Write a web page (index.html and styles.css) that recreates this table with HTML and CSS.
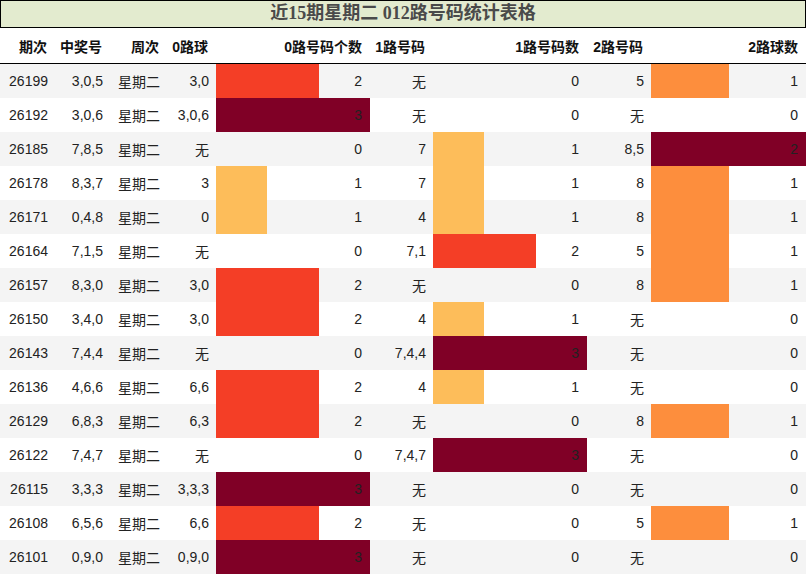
FILE: index.html
```html
<!DOCTYPE html>
<html lang="zh">
<head>
<meta charset="utf-8">
<link rel="stylesheet" href="styles.css">
</head>
<body>
<div class="title">近15期星期二 012路号码统计表格</div>
<table class="stats">
<colgroup>
<col class="c55"><col class="c55"><col class="c57"><col class="c49"><col class="c154"><col class="c63"><col class="c154"><col class="c64"><col class="c155">
</colgroup>
<thead>
<tr><th>期次</th><th>中奖号</th><th>周次</th><th>0路球</th><th>0路号码个数</th><th>1路号码</th><th>1路号码数</th><th>2路号码</th><th>2路球数</th></tr>
</thead>
<tbody>
<tr><td>26199</td><td>3,0,5</td><td>星期二</td><td>3,0</td><td class="bar"><i class="b2" style="width:66.67%"></i><span>2</span></td><td>无</td><td class="bar"><span>0</span></td><td>5</td><td class="bar"><i class="h1" style="width:50%"></i><span>1</span></td></tr>
<tr><td>26192</td><td>3,0,6</td><td>星期二</td><td>3,0,6</td><td class="bar"><i class="b3" style="width:100%"></i><span>3</span></td><td>无</td><td class="bar"><span>0</span></td><td>无</td><td class="bar"><span>0</span></td></tr>
<tr><td>26185</td><td>7,8,5</td><td>星期二</td><td>无</td><td class="bar"><span>0</span></td><td>7</td><td class="bar"><i class="b1" style="width:33.33%"></i><span>1</span></td><td>8,5</td><td class="bar"><i class="b3" style="width:100%"></i><span>2</span></td></tr>
<tr><td>26178</td><td>8,3,7</td><td>星期二</td><td>3</td><td class="bar"><i class="b1" style="width:33.33%"></i><span>1</span></td><td>7</td><td class="bar"><i class="b1" style="width:33.33%"></i><span>1</span></td><td>8</td><td class="bar"><i class="h1" style="width:50%"></i><span>1</span></td></tr>
<tr><td>26171</td><td>0,4,8</td><td>星期二</td><td>0</td><td class="bar"><i class="b1" style="width:33.33%"></i><span>1</span></td><td>4</td><td class="bar"><i class="b1" style="width:33.33%"></i><span>1</span></td><td>8</td><td class="bar"><i class="h1" style="width:50%"></i><span>1</span></td></tr>
<tr><td>26164</td><td>7,1,5</td><td>星期二</td><td>无</td><td class="bar"><span>0</span></td><td>7,1</td><td class="bar"><i class="b2" style="width:66.67%"></i><span>2</span></td><td>5</td><td class="bar"><i class="h1" style="width:50%"></i><span>1</span></td></tr>
<tr><td>26157</td><td>8,3,0</td><td>星期二</td><td>3,0</td><td class="bar"><i class="b2" style="width:66.67%"></i><span>2</span></td><td>无</td><td class="bar"><span>0</span></td><td>8</td><td class="bar"><i class="h1" style="width:50%"></i><span>1</span></td></tr>
<tr><td>26150</td><td>3,4,0</td><td>星期二</td><td>3,0</td><td class="bar"><i class="b2" style="width:66.67%"></i><span>2</span></td><td>4</td><td class="bar"><i class="b1" style="width:33.33%"></i><span>1</span></td><td>无</td><td class="bar"><span>0</span></td></tr>
<tr><td>26143</td><td>7,4,4</td><td>星期二</td><td>无</td><td class="bar"><span>0</span></td><td>7,4,4</td><td class="bar"><i class="b3" style="width:100%"></i><span>3</span></td><td>无</td><td class="bar"><span>0</span></td></tr>
<tr><td>26136</td><td>4,6,6</td><td>星期二</td><td>6,6</td><td class="bar"><i class="b2" style="width:66.67%"></i><span>2</span></td><td>4</td><td class="bar"><i class="b1" style="width:33.33%"></i><span>1</span></td><td>无</td><td class="bar"><span>0</span></td></tr>
<tr><td>26129</td><td>6,8,3</td><td>星期二</td><td>6,3</td><td class="bar"><i class="b2" style="width:66.67%"></i><span>2</span></td><td>无</td><td class="bar"><span>0</span></td><td>8</td><td class="bar"><i class="h1" style="width:50%"></i><span>1</span></td></tr>
<tr><td>26122</td><td>7,4,7</td><td>星期二</td><td>无</td><td class="bar"><span>0</span></td><td>7,4,7</td><td class="bar"><i class="b3" style="width:100%"></i><span>3</span></td><td>无</td><td class="bar"><span>0</span></td></tr>
<tr><td>26115</td><td>3,3,3</td><td>星期二</td><td>3,3,3</td><td class="bar"><i class="b3" style="width:100%"></i><span>3</span></td><td>无</td><td class="bar"><span>0</span></td><td>无</td><td class="bar"><span>0</span></td></tr>
<tr><td>26108</td><td>6,5,6</td><td>星期二</td><td>6,6</td><td class="bar"><i class="b2" style="width:66.67%"></i><span>2</span></td><td>无</td><td class="bar"><span>0</span></td><td>5</td><td class="bar"><i class="h1" style="width:50%"></i><span>1</span></td></tr>
<tr><td>26101</td><td>0,9,0</td><td>星期二</td><td>0,9,0</td><td class="bar"><i class="b3" style="width:100%"></i><span>3</span></td><td>无</td><td class="bar"><span>0</span></td><td>无</td><td class="bar"><span>0</span></td></tr>
</tbody>
</table>
</body>
</html>
```
FILE: styles.css
```css
html, body {
  margin: 0;
  padding: 0;
  background: #fff;
}
body {
  width: 806px;
  font-family: "Liberation Sans", "Noto Sans CJK SC", sans-serif;
  color: #222;
}
.title {
  box-sizing: border-box;
  height: 28px;
  border: 1px solid #000;
  background: #e3ebcf;
  color: #4a4a4a;
  font-family: "Liberation Serif", "Noto Sans CJK SC", serif;
  font-weight: bold;
  font-size: 18px;
  line-height: 25px;
  text-align: center;
}
.stats {
  width: 806px;
  table-layout: fixed;
  border-collapse: collapse;
  font-size: 14px;
}
.c55 { width: 55px; }
.c57 { width: 57px; }
.c49 { width: 49px; }
.c154 { width: 154px; }
.c63 { width: 63px; }
.c64 { width: 64px; }
.c155 { width: 155px; }
.stats th {
  height: 35px;
  padding: 0 8px 0 0;
  text-align: right;
  font-weight: bold;
  color: #111;
  border-bottom: 1px solid #000;
  white-space: nowrap;
}
.stats td {
  height: 34px;
  padding: 0 7px 0 0;
  text-align: right;
  white-space: nowrap;
  vertical-align: middle;
}
.stats tbody tr:nth-child(odd) { background: #f4f4f4; }
.stats tbody tr:nth-child(even) { background: #fff; }
.stats td.bar {
  position: relative;
  padding-right: 8px;
}
.stats td.bar i {
  position: absolute;
  left: 0;
  top: 0;
  bottom: 0;
}
.stats td.bar span {
  position: relative;
}
.b1 { background: #fdbd5a; }
.b2 { background: #f43e26; }
.b3 { background: #800026; }
.h1 { background: #fd8e3d; }
```
